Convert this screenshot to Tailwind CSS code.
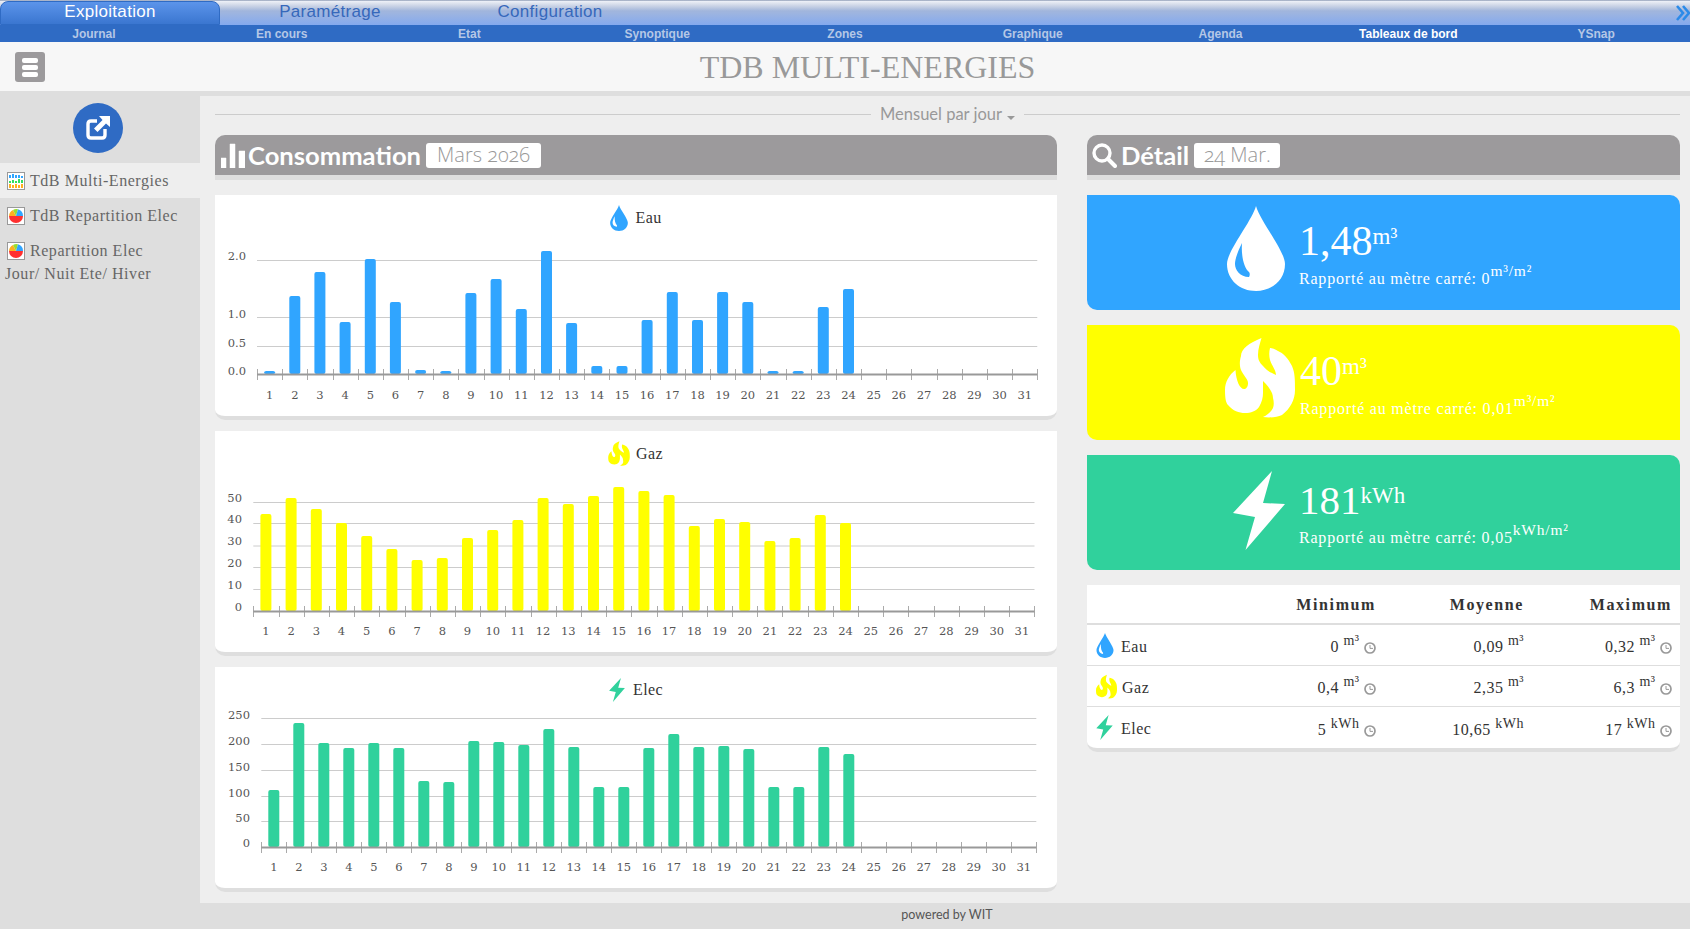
<!DOCTYPE html>
<html lang="fr"><head><meta charset="utf-8"><title>TDB</title>
<script src="https://cdn.jsdelivr.net/npm/@tailwindcss/browser@4"></script></head>
<body class="h-[929px] w-[1690px] overflow-hidden bg-[#dedede] font-['Liberation_Serif',serif] text-[#333]">
<svg class="hidden">
<symbol id="drop" viewBox="0 0 58 85"><path fill="currentColor" fill-rule="evenodd" d="M29 0C33 15 58 45 58 58C58 74 45 85 29 85C13 85 0 74 0 58C0 45 25 15 29 0ZM15 37C10 47 8 54 8 58C8 64 13 71 22 71C23 69 23 67 22 66C17 62 14 50 15 37Z"/></symbol>
<symbol id="flame" viewBox="0 0 70 81"><path fill="currentColor" d="M36.5 1C24 6 16 12 16 19C14 26 15 30 16 33C18 38 23 42 23 46C23 50 21 52 19 52C15 52 11 44 10.5 33C4 38 0 45 0 53C0 62 1 66 3 68C8 74 14 76 20 76C26 76 31 74 34 70C37 65 38 60 38 56C38 52 38 48 38 44C43 49 48 55 48 61C49 65 49 68 48 71C46 75 42 78 38 80C46 81 52 80 57 78C65 72 70 63 70 53C70 43 70 36 67 29C63 21 58 16 53 14C50 12 47 11 45 11C44 15 44 19 45 23C47 29 51 33 51 38C46 36 41 33 38 29C34 25 33 22 33 18C33 12 35 6 36.5 1Z"/></symbol>
<symbol id="bolt" viewBox="0 0 52 79"><path fill="currentColor" d="M39 0L0 42L22 46L12.5 79L52 33L30 32Z"/></symbol>
<symbol id="clock" viewBox="0 0 12 12"><circle cx="6" cy="6" r="5" fill="none" stroke="currentColor" stroke-width="1.7"/><path d="M6 3V6.4H9" fill="none" stroke="currentColor" stroke-width="1"/></symbol>
</svg>

<nav class="relative flex h-[25px] bg-gradient-to-b from-[#aab4c8] via-[#9fb5df] to-[#84a9ee] font-['Liberation_Sans',sans-serif] text-[17px] tracking-[0.3px]">
  <div class="absolute inset-x-0 top-[1px] h-[10px] bg-gradient-to-b from-[#eef1f8] to-white/0"></div>
  <a class="relative mt-[1px] flex w-[220px] items-center justify-center rounded-t-lg border border-[#2f6bc4] bg-gradient-to-b from-[#5b94ea] to-[#3a76d0] pb-[2px] text-white">Exploitation</a>
  <a class="relative flex w-[220px] items-center justify-center pb-[2px] text-[#3668bb]">Paramétrage</a>
  <a class="relative flex w-[220px] items-center justify-center pb-[2px] text-[#3668bb]">Configuration</a>
  <svg class="absolute right-0 top-[5px]" width="14" height="16" viewBox="0 0 14 16"><path d="M1 1L7 8L1 15M7 1L13 8L7 15" fill="none" stroke="#2b8ae8" stroke-width="2.6"/></svg>
</nav>
<nav class="grid h-[17px] grid-cols-9 bg-[#2f6bc4] text-center font-['Liberation_Sans',sans-serif] text-[12px] leading-[18px] font-bold text-[#b5c7e6]">
  <a>Journal</a><a>En cours</a><a>Etat</a><a>Synoptique</a><a>Zones</a><a>Graphique</a><a>Agenda</a><a class="text-white">Tableaux de bord</a><a>YSnap</a>
</nav>
<header class="flex h-[54px] items-start border-b-[5px] border-[#dedede] bg-[#f7f7f7]">
  <button class="mt-[10px] ml-[15px] flex h-[30px] w-[30px] flex-col items-center justify-center gap-[2px] rounded-[3px] bg-[#9c9a9c]">
    <span class="h-[5px] w-[16px] rounded-[2px] bg-white"></span><span class="h-[5px] w-[16px] rounded-[2px] bg-white"></span><span class="h-[5px] w-[16px] rounded-[2px] bg-white"></span>
  </button>
  <h1 class="flex-1 text-center text-[32px] leading-[51px] text-[#999]">TDB MULTI-ENERGIES</h1>
</header>

<div class="flex h-[807px]">
  <aside class="w-[200px] shrink-0 pt-[7px] text-[16px] tracking-[0.55px] text-[#666]">
    <div class="mb-[10px] flex justify-center pr-[4px]">
      <div class="flex h-[50px] w-[50px] items-center justify-center rounded-full bg-[#2f6bc4]">
        <svg width="26" height="26" viewBox="0 0 26 26"><path d="M12 6H6Q3 6 3 9V20Q3 23 6 23H17Q20 23 20 20V14" fill="none" stroke="#fff" stroke-width="3.4"/><path d="M25 1H14L17.5 5L9 13.5L12.5 17L21 8.5L25 12Z" fill="#fff"/></svg>
      </div>
    </div>
    <div class="flex h-[35px] items-center bg-[#eee] pl-[7px]">
      <svg class="mr-[5px]" width="18" height="18" viewBox="0 0 18 18"><rect x=".5" y=".5" width="17" height="17" fill="#fff" stroke="#999"/><path d="M2 3h2v3H2zM5 2h2v4H5zM8 3h2v3H8zM11 3h2v3h-2zM14 4h2v2h-2z" fill="#30a5ff"/><path d="M2 9h2v2H2zM5 8h2v3H5zM8 9h2v2H8zM11 7h2v4h-2zM14 8h2v3h-2z" fill="#30e060"/><path d="M2 12h2v4H2zM5 13h2v3H5zM8 12h2v4H8zM11 13h2v3h-2zM14 12h2v4h-2z" fill="#ffb020"/></svg>
      TdB Multi-Energies
    </div>
    <div class="flex h-[35px] items-center pl-[7px]">
      <svg class="mr-[5px]" width="18" height="18" viewBox="0 0 18 18"><rect x=".5" y=".5" width="17" height="17" fill="#fff" stroke="#999"/><path d="M2 9A7 7 0 0 0 16 9Z" fill="#ff3030"/><path d="M2 9A7 7 0 0 1 6 3L9 9Z" fill="#ffb020"/><path d="M6 3A7 7 0 0 1 11 2.3L9 9Z" fill="#9ade30"/><path d="M11 2.3A7 7 0 0 1 16 9H9Z" fill="#30a5ff"/></svg>
      TdB Repartition Elec
    </div>
    <div class="pt-[6px] pl-[5px] leading-[23px]">
      <div class="flex items-center pl-[2px]">
        <svg class="mr-[5px]" width="18" height="18" viewBox="0 0 18 18"><rect x=".5" y=".5" width="17" height="17" fill="#fff" stroke="#999"/><path d="M2 9A7 7 0 0 0 16 9Z" fill="#ff3030"/><path d="M2 9A7 7 0 0 1 6 3L9 9Z" fill="#ffb020"/><path d="M6 3A7 7 0 0 1 11 2.3L9 9Z" fill="#9ade30"/><path d="M11 2.3A7 7 0 0 1 16 9H9Z" fill="#30a5ff"/></svg>
        Repartition Elec
      </div>
      <div>Jour/ Nuit Ete/ Hiver</div>
    </div>
  </aside>

  <main class="flex-1 bg-[#eee] px-[15px]">
    <div class="mb-[3px] flex h-[36px] items-center gap-[9px] font-['Lato',sans-serif] text-[16.5px] text-[#999]">
      <div class="h-px flex-1 bg-[#ccc]"></div>
      <span class="flex items-center gap-[5px]">Mensuel par jour <svg width="8" height="4" class="mt-[7px]"><path d="M0 0H8L4 4Z" fill="#999"/></svg></span>
      <div class="h-px flex-1 bg-[#ccc]"></div>
    </div>
    <div class="flex gap-[30px]">
      <section class="w-[842px]">
        <div class="mb-[15px] flex h-[45px] items-start border-b-[5px] border-[#dedede]">
          <div class="flex h-[40px] w-full items-center rounded-t-[10px] bg-[#9c9a9c] pl-[6px] font-['Lato',sans-serif] text-[25.6px] font-bold text-white">
            <svg class="mr-[3px]" width="24" height="26" viewBox="0 0 24 26"><path d="M0 16H5V26H0ZM9 2H14V26H9ZM18 9H24V26H18Z" fill="#fff" stroke="#fff" stroke-width=".5" stroke-linejoin="round"/></svg>
            <span>Consommation</span>
            <span class="ml-[5px] flex h-[25px] w-[115px] items-center justify-center rounded-[3px] bg-white font-['Open_Sans',sans-serif] text-[20px] font-light text-[#999] oldstyle-nums">Mars 2026</span>
          </div>
        </div>
        <div class="flex flex-col gap-[11px]">
          <article class="h-[225px] rounded-b-[10px] border-b-4 border-[#dedede] bg-white">
            <div class="flex h-[44px] items-center justify-center gap-[7px] pt-[1px] text-[16px] tracking-[0.4px]"><svg class="h-[26px] w-[20px] text-[#30a5ff]"><use href="#drop"/></svg><span class="w-[28px]">Eau</span></div>
            <svg class="chart" width="842" height="177" data-x0="42" data-step="25.17" data-base="135" data-h="3,78,102,52,115,72,4,3,81,95,65,123,51,8,8,54,82,54,82,72,3,3,67,85" data-grid="21,78,107" data-yl="2.0,1.0,0.5,0.0" data-ly="21,79,108,136" data-lx="31">
              <g class="grid stroke-[#ccc]"></g><g class="bars fill-[#30a5ff]"></g><g class="ticks stroke-[#aaa]"></g><g class="axis stroke-[#999]"></g>
              <g class="xl fill-[#555] font-['DejaVu_Serif',serif] text-[11.5px] [text-anchor:middle]"></g><g class="yl fill-[#555] font-['DejaVu_Serif',serif] text-[11.5px] [text-anchor:end]"></g>
            </svg>
          </article>
          <article class="h-[225px] rounded-b-[10px] border-b-4 border-[#dedede] bg-white">
            <div class="flex h-[44px] items-center justify-center gap-[6px] pt-[1px] text-[16px] tracking-[0.4px]"><svg class="h-[25px] w-[22px] text-[#ffff00]"><use href="#flame"/></svg><span class="w-[28px]">Gaz</span></div>
            <svg class="chart" width="842" height="177" data-x0="38.3" data-step="25.2" data-base="136" data-h="97,113,102,88,75,62,51,53,73,81,91,113,107,115,124,120,116,85,92,89,70,73,96,88" data-grid="27,48,70.5,92,114" data-yl="50,40,30,20,10,0" data-ly="27,48,70,92,114,136" data-lx="27">
              <g class="grid stroke-[#ccc]"></g><g class="bars fill-[#ffff00]"></g><g class="ticks stroke-[#aaa]"></g><g class="axis stroke-[#999]"></g>
              <g class="xl fill-[#555] font-['DejaVu_Serif',serif] text-[11.5px] [text-anchor:middle]"></g><g class="yl fill-[#555] font-['DejaVu_Serif',serif] text-[11.5px] [text-anchor:end]"></g>
            </svg>
          </article>
          <article class="h-[225px] rounded-b-[10px] border-b-4 border-[#dedede] bg-white">
            <div class="flex h-[44px] items-center justify-center gap-[8px] pt-[1px] text-[16px] tracking-[0.4px]"><svg class="h-[24px] w-[16px] text-[#30d19c]"><use href="#bolt"/></svg><span class="w-[30px]">Elec</span></div>
            <svg class="chart" width="842" height="177" data-x0="46.3" data-step="25" data-base="136" data-h="57,124,104,99,104,99,66,65,106,105,102,118,100,60,60,99,113,100,101,98,60,60,100,93" data-grid="7,33,59,85,110" data-yl="250,200,150,100,50,0" data-ly="8,34,60,86,111,136" data-lx="35">
              <g class="grid stroke-[#ccc]"></g><g class="bars fill-[#30d19c]"></g><g class="ticks stroke-[#aaa]"></g><g class="axis stroke-[#999]"></g>
              <g class="xl fill-[#555] font-['DejaVu_Serif',serif] text-[11.5px] [text-anchor:middle]"></g><g class="yl fill-[#555] font-['DejaVu_Serif',serif] text-[11.5px] [text-anchor:end]"></g>
            </svg>
          </article>
        </div>
      </section>

      <section class="w-[593px]">
        <div class="mb-[15px] h-[45px] border-b-[5px] border-[#dedede]">
          <div class="flex h-[40px] items-center rounded-t-[10px] bg-[#9c9a9c] pl-[5px] font-['Lato',sans-serif] text-[25.6px] font-bold text-white">
            <svg class="mr-[4px]" width="25" height="25" viewBox="0 0 25 25"><circle cx="10" cy="10" r="8" fill="none" stroke="#fff" stroke-width="3.4"/><path d="M16 16L23 23" stroke="#fff" stroke-width="4" stroke-linecap="round"/></svg>
            <span>Détail</span>
            <span class="ml-[5px] flex h-[25px] w-[86px] items-center justify-center rounded-[3px] bg-white font-['Open_Sans',sans-serif] text-[20px] font-light text-[#999] oldstyle-nums">24 Mar.</span>
          </div>
        </div>
        <div class="flex flex-col gap-[15px] text-white">
          <div class="flex h-[115px] items-center rounded-tr-[10px] rounded-bl-[10px] bg-[#30a5ff] pl-[140px]">
            <svg class="mb-[8px] h-[85px] w-[58px]"><use href="#drop"/></svg>
            <div class="mt-[6px] ml-[14px]"><div class="h-[47px] text-[42px] leading-[42px]">1,48<sup class="text-[23px]">m³</sup></div><div class="text-[16px] tracking-[0.8px]">Rapporté au mètre carré: 0<sup class="text-[15.5px]">m³/m²</sup></div></div>
          </div>
          <div class="flex h-[115px] items-center rounded-tr-[10px] rounded-bl-[10px] bg-[#ffff00] pl-[138px]">
            <svg class="mb-[11px] h-[81px] w-[70px]"><use href="#flame"/></svg>
            <div class="mt-[6px] ml-[5px]"><div class="h-[47px] text-[42px] leading-[42px]">40<sup class="text-[23px]">m³</sup></div><div class="text-[16px] tracking-[0.8px]">Rapporté au mètre carré: 0,01<sup class="text-[15.5px]">m³/m²</sup></div></div>
          </div>
          <div class="flex h-[115px] items-center rounded-tr-[10px] rounded-bl-[10px] bg-[#30d19c] pl-[146px]">
            <svg class="mb-[4px] h-[79px] w-[52px]"><use href="#bolt"/></svg>
            <div class="mt-[4px] ml-[14px]"><div class="h-[47px] text-[41px] leading-[42px]">181<sup class="text-[23px]">kWh</sup></div><div class="text-[16px] tracking-[0.8px]">Rapporté au mètre carré: 0,05<sup class="text-[15.5px]">kWh/m²</sup></div></div>
          </div>
          <table class="w-[593px] table-fixed border-separate border-spacing-0 overflow-hidden rounded-b-[10px] border-b-4 border-[#dedede] bg-white text-right text-[16px] leading-none tracking-[0.5px] text-[#333]">
            <colgroup><col class="w-[149px]"><col class="w-[148px]"><col class="w-[148px]"><col class="w-[148px]"></colgroup>
            <thead><tr class="h-[40px] font-bold tracking-[1.6px]"><th class="border-b-[2px] border-[#dedede]"></th><th class="border-b-[2px] border-[#dedede] pt-[2px] pr-[8px]">Minimum</th><th class="border-b-[2px] border-[#dedede] pt-[2px] pr-[8px]">Moyenne</th><th class="border-b-[2px] border-[#dedede] pt-[2px] pr-[8px]">Maximum</th></tr></thead>
            <tbody>
              <tr class="h-[41px]">
                <td class="border-b border-[#dedede] pl-[9px] text-left"><span class="flex items-center"><svg class="mr-[7px] h-[25px] w-[18px] text-[#30a5ff]"><use href="#drop"/></svg><span class="pt-[3px]">Eau</span></span></td>
                <td class="border-b border-[#dedede] pt-[4px] pr-[8px]">0 <sup class="text-[14px]">m³</sup> <svg class="inline h-[12px] w-[12px] text-[#999]"><use href="#clock"/></svg></td>
                <td class="border-b border-[#dedede] pt-[4px] pr-[8px]">0,09 <sup class="text-[14px]">m³</sup></td>
                <td class="border-b border-[#dedede] pt-[4px] pr-[8px]">0,32 <sup class="text-[14px]">m³</sup> <svg class="inline h-[12px] w-[12px] text-[#999]"><use href="#clock"/></svg></td>
              </tr>
              <tr class="h-[41px]">
                <td class="border-b border-[#dedede] pl-[9px] text-left"><span class="flex items-center"><svg class="mr-[5px] h-[25px] w-[21px] text-[#ffff00]"><use href="#flame"/></svg><span class="pt-[3px]">Gaz</span></span></td>
                <td class="border-b border-[#dedede] pt-[4px] pr-[8px]">0,4 <sup class="text-[14px]">m³</sup> <svg class="inline h-[12px] w-[12px] text-[#999]"><use href="#clock"/></svg></td>
                <td class="border-b border-[#dedede] pt-[4px] pr-[8px]">2,35 <sup class="text-[14px]">m³</sup></td>
                <td class="border-b border-[#dedede] pt-[4px] pr-[8px]">6,3 <sup class="text-[14px]">m³</sup> <svg class="inline h-[12px] w-[12px] text-[#999]"><use href="#clock"/></svg></td>
              </tr>
              <tr class="h-[41px]">
                <td class="pl-[9px] text-left"><span class="flex items-center"><svg class="mr-[8px] h-[25px] w-[17px] text-[#30d19c]"><use href="#bolt"/></svg><span class="pt-[3px]">Elec</span></span></td>
                <td class="pt-[4px] pr-[8px]">5 <sup class="text-[14px]">kWh</sup> <svg class="inline h-[12px] w-[12px] text-[#999]"><use href="#clock"/></svg></td>
                <td class="pt-[4px] pr-[8px]">10,65 <sup class="text-[14px]">kWh</sup></td>
                <td class="pt-[4px] pr-[8px]">17 <sup class="text-[14px]">kWh</sup> <svg class="inline h-[12px] w-[12px] text-[#999]"><use href="#clock"/></svg></td>
              </tr>
            </tbody>
          </table>
        </div>
      </section>
    </div>
  </main>
</div>
<footer class="h-[26px] pl-[204px] text-center font-['Lato',sans-serif] text-[12.5px] leading-[24px] text-[#555]"><span>powered by WIT</span></footer>

<script>
document.querySelectorAll('svg.chart').forEach(function(s){
  var x0=+s.dataset.x0,st=+s.dataset.step,b=+s.dataset.base,right=x0+31*st,q=function(c){return s.querySelector('.'+c)};
  q('grid').innerHTML=s.dataset.grid.split(',').map(function(y){return '<line x1="'+x0+'" x2="'+right+'" y1="'+(+y+.5)+'" y2="'+(+y+.5)+'"/>'}).join('');
  q('bars').innerHTML=s.dataset.h.split(',').map(function(h,i){var c=x0+st*(i+.5);return '<rect x="'+(c-5.5).toFixed(1)+'" y="'+(b-h)+'" width="11" height="'+h+'" rx="2"/>'}).join('');
  var t='';for(var i=0;i<=31;i++){var x=Math.round(x0+st*i)+.5;t+='<line x1="'+x+'" x2="'+x+'" y1="'+(b-5)+'" y2="'+(b+6)+'"/>'}
  q('ticks').innerHTML=t;
  q('axis').innerHTML='<line x1="'+x0+'" x2="'+right+'" y1="'+(b+.5)+'" y2="'+(b+.5)+'" stroke-width="2"/>';
  var l='';for(var d=1;d<=31;d++){l+='<text x="'+(x0+st*(d-.5)).toFixed(1)+'" y="160">'+d+'</text>'}
  q('xl').innerHTML=l;
  var ly=s.dataset.ly.split(',');
  q('yl').innerHTML=s.dataset.yl.split(',').map(function(v,i){return '<text x="'+s.dataset.lx+'" y="'+ly[i]+'">'+v+'</text>'}).join('');
});
</script>
</body></html>
